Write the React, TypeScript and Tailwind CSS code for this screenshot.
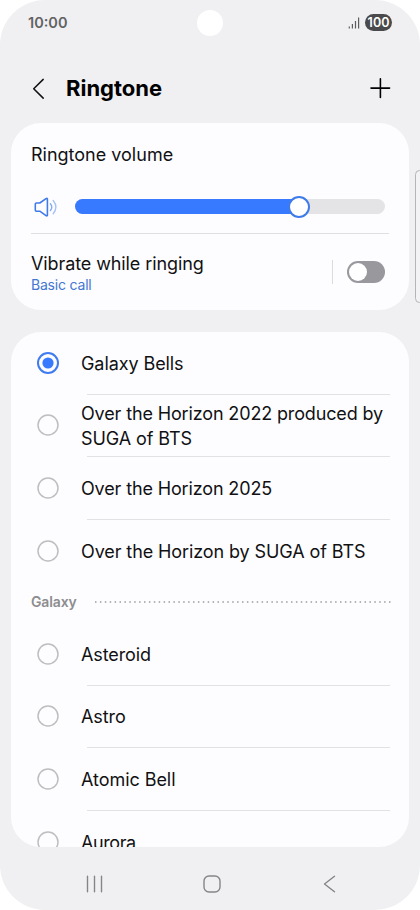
import React from "react";

type Tone = { lines: { text: string; track: string }[]; selected?: boolean; last?: boolean };

const TOP_TONES: Tone[] = [
  { lines: [{ text: "Galaxy Bells", track: "tracking-[-0.08px]" }], selected: true },
  {
    lines: [
      { text: "Over the Horizon 2022 produced by", track: "tracking-[-0.14px]" },
      { text: "SUGA of BTS", track: "tracking-[-0.09px]" },
    ],
  },
  { lines: [{ text: "Over the Horizon 2025", track: "tracking-[-0.14px]" }] },
  { lines: [{ text: "Over the Horizon by SUGA of BTS", track: "tracking-[-0.1px]" }], last: true },
];

const GALAXY_TONES: Tone[] = [
  { lines: [{ text: "Asteroid", track: "tracking-[-0.1px]" }] },
  { lines: [{ text: "Astro", track: "tracking-[-0.1px]" }] },
  { lines: [{ text: "Atomic Bell", track: "tracking-[-0.05px]" }] },
  { lines: [{ text: "Aurora", track: "tracking-[-0.4px]" }], last: true },
];

function Radio({ selected }: { selected?: boolean }) {
  return (
    <svg className="block h-6 w-6 shrink-0" viewBox="0 0 24 24" fill="none">
      {selected ? (
        <>
          <circle cx="12" cy="12" r="10" stroke="#407bf0" strokeWidth="2" />
          <circle cx="12" cy="12" r="5.6" fill="#387aff" />
        </>
      ) : (
        <circle cx="12" cy="12" r="10" stroke="#bebec1" strokeWidth="1.5" />
      )}
    </svg>
  );
}

function ToneRow({ tone }: { tone: Tone }) {
  return (
    <div className="flex h-[62.6px] shrink-0 flex-col">
      <div className="flex min-h-0 flex-1 items-center pl-[25px]">
        <Radio selected={tone.selected} />
        <div className="mt-[2.4px] ml-[21px] flex flex-col text-[18px] leading-[24.7px] whitespace-nowrap text-[#111113]">
          {tone.lines.map((l) => (
            <span key={l.text} className={l.track}>{l.text}</span>
          ))}
        </div>
      </div>
      {!tone.last && <div className="mr-[19px] ml-[76px] h-px shrink-0 bg-[#e2e2e4]" />}
    </div>
  );
}

export default function App() {
  return (
    <div className="h-[910px] w-[420px] overflow-hidden bg-white font-['Inter','Liberation_Sans',sans-serif]">
      <div className="relative flex h-full w-full flex-col overflow-hidden rounded-[45px] bg-[#f0f0f2]">
        <header className="flex h-[45px] shrink-0 items-center pr-[28px] pl-[28px]">
          <span className="w-[169px] pt-px text-[14.5px] font-semibold text-[#626264]">10:00</span>
          <span className="h-[26px] w-[26px] shrink-0 rounded-full bg-white" />
          <span className="flex flex-1 items-center justify-end gap-[5px]">
            <svg className="h-3 w-3" viewBox="0 0 12 12" stroke="#5c5c5e" strokeWidth="1.2">
              <path d="M1.3 9.5v2M4.4 7v4.5M7.5 4v7.5M10.6 .5v11" />
            </svg>
            <span className="flex h-[17px] w-[27px] items-center justify-center rounded-full bg-[#4a4a4c] text-[12.5px] leading-[17px] font-semibold text-white">100</span>
          </span>
        </header>

        <div className="flex h-[78px] shrink-0 items-center pr-[29px] pl-[31px]">
          <svg className="mt-[9px] h-[24px] w-[16px]" viewBox="0 0 16 24" fill="none" stroke="#111" strokeWidth="1.5" strokeLinecap="round" strokeLinejoin="round">
            <path d="M12.2 2.4 2.7 11.7l9.5 9.4" />
          </svg>
          <h1 className="mt-[9px] ml-[19px] flex-1 text-[22px] font-bold text-black">Ringtone</h1>
          <svg className="mt-[8px] h-[22px] w-[22px]" viewBox="0 0 22 22" stroke="#000" strokeWidth="1.6" strokeLinecap="round">
            <path d="M11.4 1.8v18.6M2 11.1h18.6" />
          </svg>
        </div>

        <section className="mx-[11px] flex h-[187px] shrink-0 flex-col rounded-[30px] bg-[#fdfdff]">
          <h2 className="mt-[20px] ml-[20px] text-[18px] leading-[24px] text-[#111113]">Ringtone volume</h2>
          <div className="mt-[25px] flex h-[29px] items-center pr-[24px] pl-[23px]">
            <svg className="h-6 w-6 shrink-0" viewBox="0 0 24 24" fill="none" stroke="#407bea" strokeWidth="1.6" strokeLinejoin="round" strokeLinecap="round">
              <path d="M2.4 8H5.8L12 3.6q1.4-.8 1.4.7v15.6q0 1.5-1.4.7L5.8 16.2H2.4q-1.1 0-1.1-1.1V9.1q0-1.1 1.1-1.1Z" />
              <path d="M16.4 8.7q2.8 3.4 0 6.8" stroke="#86abef" strokeWidth="1.4" />
              <path d="M19.2 5.5q5.4 6.6 0 13.2" stroke="#a7c2f6" strokeWidth="1.4" />
            </svg>
            <div className="ml-[17px] flex h-[15px] flex-1 items-center rounded-full bg-[#e4e4e6]">
              <div className="h-[15px] w-[224px] rounded-l-full bg-[#387aff]" />
              <div className="-ml-[11px] h-[22px] w-[22px] shrink-0 rounded-full border-2 border-[#407bea] bg-white" />
            </div>
          </div>
          <div className="mx-[20px] mt-[12px] h-px shrink-0 bg-[#dfdfe1]" />
          <div className="mt-[16px] flex items-center pr-[24px] pl-[20px]">
            <div className="flex flex-1 flex-col pb-px">
              <span className="text-[18px] leading-[27px] tracking-[-0.1px] text-[#111113]">Vibrate while ringing</span>
              <span className="text-[14px] leading-[16px] tracking-[-0.2px] text-[#4377d2]">Basic call</span>
            </div>
            <div className="mr-[14px] h-[24px] w-px bg-[#dcdcde]" />
            <div className="flex h-[22px] w-[38px] items-center rounded-full bg-[#98989d] pl-[2px]">
              <div className="h-[18px] w-[18px] rounded-full bg-white" />
            </div>
          </div>
        </section>

        <section className="mx-[11px] mt-[22px] flex h-[514.5px] shrink-0 flex-col overflow-hidden rounded-[30px] bg-[#fdfdff]">
          {TOP_TONES.map((t) => <ToneRow key={t.lines[0].text} tone={t} />)}
          <div className="flex h-[40.6px] shrink-0 items-center pr-[18px] pb-[1.4px] pl-[20px]">
            <span className="w-[64px] text-[14px] font-semibold tracking-[-0.15px] text-[#8d8d90]">Galaxy</span>
            <svg className="h-[2px] w-[296px]" viewBox="0 0 296 2">
              <path d="M0 1h296" stroke="#9c9c9f" strokeWidth="1.5" strokeDasharray="1.5 3.4" />
            </svg>
          </div>
          {GALAXY_TONES.map((t) => <ToneRow key={t.lines[0].text} tone={t} />)}
        </section>

        <nav className="flex flex-1 items-center pt-[12px] pl-[86px]">
          <svg className="h-[18px] w-[18px]" viewBox="0 0 18 18" stroke="#858588" strokeWidth="1.4" strokeLinecap="round">
            <path d="M1.5 1.2v15.6M8.5 1.2v15.6M15.5 1.2v15.6" />
          </svg>
          <svg className="ml-[99px] h-[18px] w-[18px]" viewBox="0 0 18 18" fill="none" stroke="#858588" strokeWidth="1.4">
            <rect x="1" y="1" width="16" height="16" rx="5" />
          </svg>
          <svg className="ml-[102px] h-[18px] w-[14px]" viewBox="0 0 14 18" fill="none" stroke="#858588" strokeWidth="1.4" strokeLinecap="round" strokeLinejoin="round">
            <path d="M11.5 1.2 1.5 9l10 7.8" />
          </svg>
        </nav>

        <div className="absolute top-[170px] -right-[4px] h-[133px] w-[9px] rounded-[5px] border border-[#b5b5b8] bg-[#f3f3f5]" />
      </div>
    </div>
  );
}
